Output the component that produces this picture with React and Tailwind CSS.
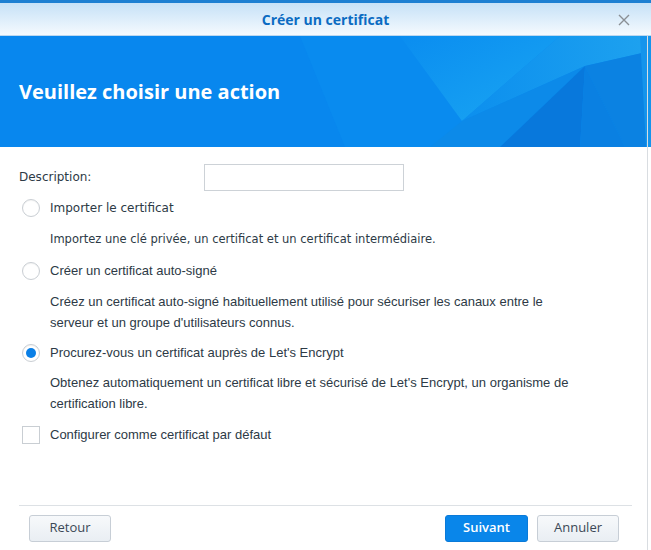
import React from "react";

function Radio({ checked }) {
  return (
    <div className="w-[18px] h-[18px] rounded-full border border-[#c9ced3] bg-white flex items-center justify-center shrink-0 shadow-[inset_0_1px_1px_rgba(0,0,0,0.05)]">
      {checked && <div className="w-[10px] h-[10px] rounded-full bg-[#0a7fe6]" />}
    </div>
  );
}

export default function App() {
  const font = { fontFamily: '"DejaVu Sans", Verdana, sans-serif' };
  const lib = { fontFamily: '"Liberation Sans", Arial, sans-serif' };
  return (
    <div className="w-[651px] h-[550px] bg-white flex flex-col overflow-hidden relative" style={lib}>
      <div className="h-[3px] bg-[#1d7fd2]" />
      <div className="h-[33px] bg-gradient-to-b from-[#c6e1f7] to-[#f5fafe] flex items-center justify-center relative border-b border-[#bcd8f0]">
        <span className="text-[14px] font-bold text-[#0b6bc2]" style={{ fontFamily: '"Open Sans", sans-serif' }}>Créer un certificat</span>
        <svg className="absolute right-[21px] top-[11px]" width="12" height="12" viewBox="0 0 12 12">
          <path d="M1 1L11 11M11 1L1 11" stroke="#8a8f94" strokeWidth="1.4" />
        </svg>
      </div>
      <div className="h-[111px] bg-[#0887ee] relative flex items-center px-[19px] overflow-hidden">
        <svg className="absolute inset-0" width="651" height="111" viewBox="0 0 651 111" preserveAspectRatio="none">
          <defs>
            <linearGradient id="g1" x1="0" y1="0" x2="1" y2="1">
              <stop offset="0" stopColor="#0a8df0" />
              <stop offset="1" stopColor="#1aa6f2" />
            </linearGradient>
            <linearGradient id="g2" x1="0" y1="0" x2="1" y2="0">
              <stop offset="0" stopColor="#0c8fee" />
              <stop offset="1" stopColor="#1ea2ef" />
            </linearGradient>
          </defs>
          <polygon points="300,0 651,0 651,111 345,111" fill="#098bef" />
          <polygon points="400,0 560,0 462,85" fill="url(#g1)" />
          <polygon points="462,85 560,0 651,0 651,15 585,30" fill="url(#g2)" />
          <polygon points="430,111 462,85 585,30 500,111" fill="#0c8ae9" />
          <polygon points="585,30 651,15 651,111 625,111" fill="#0b82e2" />
          <polygon points="500,111 585,30 580,111" fill="#0878dc" />
          <polygon points="580,111 585,30 625,111" fill="#0a80e2" />
          <polygon points="640,0 651,0 651,111 646,111" fill="#1594ec" />
        </svg>
        <span className="relative text-white text-[20px] font-bold" style={{ fontFamily: '"Open Sans", sans-serif' }}>Veuillez choisir une action</span>
      </div>
      <div className="flex-1 flex flex-col px-[19px] text-[13px] text-[#2d3a46]" style={font}>
        <div className="flex items-center mt-[17px] h-[26px]">
          <span className="w-[185px] text-[12px]">Description:</span>
          <div className="w-[200px] h-[27px] border border-[#cdd2d7] bg-white" />
        </div>
        <div className="flex items-center gap-[10px] mt-[5px] pl-[3px] h-[26px]">
          <Radio />
          <span className="text-[12px]">Importer le certificat</span>
        </div>
        <div className="pl-[31px] mt-[8px] text-[11.5px] leading-[21px]">Importez une clé privée, un certificat et un certificat intermédiaire.</div>
        <div className="flex items-center gap-[10px] mt-[8px] pl-[3px] h-[26px]" style={lib}>
          <Radio />
          <span className="text-[13px]">Créer un certificat auto-signé</span>
        </div>
        <div className="pl-[31px] mt-[7px] text-[13px] leading-[21px]" style={lib}>
          Créez un certificat auto-signé habituellement utilisé pour sécuriser les canaux entre le<br />serveur et un groupe d'utilisateurs connus.
        </div>
        <div className="flex items-center gap-[10px] mt-[7px] pl-[3px] h-[26px]" style={lib}>
          <Radio checked />
          <span className="text-[13px]">Procurez-vous un certificat auprès de Let's Encrypt</span>
        </div>
        <div className="pl-[31px] mt-[6px] text-[13px] leading-[21px]" style={lib}>
          Obtenez automatiquement un certificat libre et sécurisé de Let's Encrypt, un organisme de<br />certification libre.
        </div>
        <div className="flex items-center gap-[10px] mt-[8px] pl-[3px] h-[26px]" style={lib}>
          <div className="w-[18px] h-[18px] border border-[#c9ced3] bg-white shrink-0" />
          <span className="text-[13px]">Configurer comme certificat par défaut</span>
        </div>
        <div className="flex-1" />
        <div className="border-t border-[#dde1e5]" />
        <div className="flex items-center h-[44px] pl-[10px] pr-[13px] text-[13px]" style={{ fontFamily: '"Open Sans", sans-serif' }}>
          <button className="w-[82px] h-[27px] rounded-[3px] border border-[#c7ced6] bg-gradient-to-b from-[#f7f9fb] to-[#e9eef3] text-[#3b4856]">Retour</button>
          <div className="flex-1" />
          <button className="w-[83px] h-[27px] rounded-[3px] bg-[#0986ea] border border-[#0a7ad8] text-white font-semibold">Suivant</button>
          <button className="w-[82px] h-[27px] rounded-[3px] ml-[9px] border border-[#c7ced6] bg-gradient-to-b from-[#f7f9fb] to-[#e9eef3] text-[#3b4856]">Annuler</button>
        </div>
      </div>
      <div className="absolute right-[3px] top-[36px] bottom-0 w-px bg-[#d9dde1]" />
    </div>
  );
}
